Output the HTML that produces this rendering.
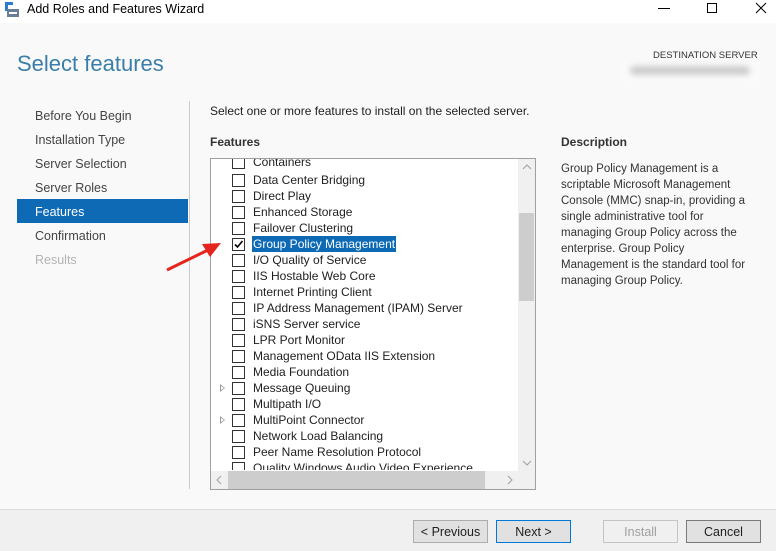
<!DOCTYPE html>
<html><head><meta charset="utf-8"><style>
*{margin:0;padding:0;box-sizing:border-box}
body{width:776px;height:551px;overflow:hidden;background:#f9f9f9;font-family:"Liberation Sans",sans-serif;font-size:12px;color:#1e1e1e;position:relative}
.a{position:absolute;white-space:nowrap}
.tb{position:absolute;left:0;top:0;width:776px;height:23px;background:#fff}
.nav{position:absolute;left:35px;font-size:12.5px;color:#444}
.row{position:absolute;left:0;height:16px;width:310px;font-size:12px;line-height:16px}
.cb{position:absolute;left:21px;top:2px;width:13px;height:13px;border:1px solid #333;background:#fff}
.lbl{position:absolute;left:41px;top:0;padding:0 1px}
.exp{position:absolute;left:9px;top:4px;width:0;height:0;border-left:5px solid #999;border-top:4px solid transparent;border-bottom:4px solid transparent}
.exp:after{content:"";position:absolute;left:-4px;top:-2px;border-left:3px solid #fff;border-top:2px solid transparent;border-bottom:2px solid transparent}
.btn{position:absolute;top:520px;height:23px;width:75px;border:1px solid #adadad;background:#e1e1e1;text-align:center;line-height:22px;font-size:12.5px}
</style></head><body>
<div class="tb"></div>
<svg class="a" style="left:4px;top:2px" width="16" height="16"><rect x="1" y="0" width="3" height="9" fill="#2b7bd0"/><rect x="1" y="0" width="8" height="3" fill="#2b7bd0"/><rect x="3" y="7" width="12" height="8" fill="#6a7f96"/><rect x="5" y="10" width="8" height="2" fill="#fff"/></svg>
<div class="a" style="left:27px;top:2px;font-size:12.5px;color:#000">Add Roles and Features Wizard</div>
<div class="a" style="left:658px;top:8px;width:12px;height:1px;background:#000"></div>
<div class="a" style="left:707px;top:3px;width:10px;height:10px;border:1px solid #000"></div>
<svg class="a" style="left:755px;top:2px" width="12" height="12"><path d="M1 1L11 11M11 1L1 11" stroke="#000" stroke-width="1"/></svg>
<div class="a" style="left:17px;top:51px;font-size:22px;color:#3a7ea8">Select features</div>
<div class="a" style="left:653px;top:50px;font-size:9.5px;color:#333">DESTINATION SERVER</div>
<div class="a" style="left:620px;top:62px;width:140px;height:20px;background:#fafafa"></div>
<div class="a" style="left:630px;top:66px;width:120px;height:9px;background:#ccc;filter:blur(3px);border-radius:5px"></div>
<div class="nav a" style="top:109px">Before You Begin</div>
<div class="nav a" style="top:133px">Installation Type</div>
<div class="nav a" style="top:157px">Server Selection</div>
<div class="nav a" style="top:181px">Server Roles</div>
<div class="a" style="left:17px;top:199px;width:171px;height:24px;background:#0e6ab4"></div>
<div class="nav a" style="top:205px;color:#fff">Features</div>
<div class="nav a" style="top:229px">Confirmation</div>
<div class="nav a" style="top:253px;color:#b4b4b4">Results</div>
<div class="a" style="left:189px;top:101px;width:1px;height:388px;background:#ccc"></div>
<div class="a" style="left:210px;top:104px;font-size:12px">Select one or more features to install on the selected server.</div>
<div class="a" style="left:210px;top:135px;font-weight:bold;font-size:12px;color:#333">Features</div>
<div class="a" style="left:561px;top:135px;font-weight:bold;font-size:12px;color:#333">Description</div>
<div class="a" style="left:561px;top:161px;font-size:11.5px;line-height:16px;color:#333">Group Policy Management is a<br>scriptable Microsoft Management<br>Console (MMC) snap-in, providing a<br>single administrative tool for<br>managing Group Policy across the<br>enterprise. Group Policy<br>Management is the standard tool for<br>managing Group Policy.</div>
<div class="a" style="left:210px;top:158px;width:326px;height:332px;border:1px solid #a0a0a0;background:#fff;overflow:hidden">
 <div class="a" style="left:0;top:0;width:307px;height:311px;overflow:hidden">
  <div class="row" style="top:-5px"><div class="cb"></div><div class="lbl">Containers</div></div>
  <div class="row" style="top:13px"><div class="cb"></div><div class="lbl">Data Center Bridging</div></div>
  <div class="row" style="top:29px"><div class="cb"></div><div class="lbl">Direct Play</div></div>
  <div class="row" style="top:45px"><div class="cb"></div><div class="lbl">Enhanced Storage</div></div>
  <div class="row" style="top:61px"><div class="cb"></div><div class="lbl">Failover Clustering</div></div>
  <div class="row" style="top:77px"><div class="cb"><svg width="11" height="11" style="position:absolute;left:0;top:0"><path d="M2 5.5L4.5 8L9.5 2" stroke="#000" stroke-width="1.6" fill="none"/></svg></div><div class="lbl" style="background:#0e6ab4;color:#fff">Group Policy Management</div></div>
  <div class="row" style="top:93px"><div class="cb"></div><div class="lbl">I/O Quality of Service</div></div>
  <div class="row" style="top:109px"><div class="cb"></div><div class="lbl">IIS Hostable Web Core</div></div>
  <div class="row" style="top:125px"><div class="cb"></div><div class="lbl">Internet Printing Client</div></div>
  <div class="row" style="top:141px"><div class="cb"></div><div class="lbl">IP Address Management (IPAM) Server</div></div>
  <div class="row" style="top:157px"><div class="cb"></div><div class="lbl">iSNS Server service</div></div>
  <div class="row" style="top:173px"><div class="cb"></div><div class="lbl">LPR Port Monitor</div></div>
  <div class="row" style="top:189px"><div class="cb"></div><div class="lbl">Management OData IIS Extension</div></div>
  <div class="row" style="top:205px"><div class="cb"></div><div class="lbl">Media Foundation</div></div>
  <div class="row" style="top:221px"><div class="exp"></div><div class="cb"></div><div class="lbl">Message Queuing</div></div>
  <div class="row" style="top:237px"><div class="cb"></div><div class="lbl">Multipath I/O</div></div>
  <div class="row" style="top:253px"><div class="exp"></div><div class="cb"></div><div class="lbl">MultiPoint Connector</div></div>
  <div class="row" style="top:269px"><div class="cb"></div><div class="lbl">Network Load Balancing</div></div>
  <div class="row" style="top:285px"><div class="cb"></div><div class="lbl">Peer Name Resolution Protocol</div></div>
  <div class="row" style="top:301px"><div class="cb"></div><div class="lbl">Quality Windows Audio Video Experience</div></div>
 </div>
 <div class="a" style="left:307px;top:0;width:17px;height:312px;background:#f0f0f0"></div>
 <div class="a" style="left:308px;top:54px;width:15px;height:88px;background:#cdcdcd"></div>
 <svg class="a" style="left:311px;top:5px" width="10" height="6"><path d="M1 5L5 1L9 5" stroke="#a0a0a0" fill="none"/></svg>
 <svg class="a" style="left:311px;top:301px" width="10" height="6"><path d="M1 1L5 5L9 1" stroke="#a0a0a0" fill="none"/></svg>
 <div class="a" style="left:0;top:312px;width:324px;height:18px;background:#f0f0f0"></div>
 <div class="a" style="left:17px;top:312px;width:257px;height:18px;background:#cdcdcd"></div>
 <svg class="a" style="left:5px;top:316px" width="6" height="10"><path d="M5 1L1 5L5 9" stroke="#a0a0a0" fill="none"/></svg>
 <svg class="a" style="left:296px;top:316px" width="6" height="10"><path d="M1 1L5 5L1 9" stroke="#a0a0a0" fill="none"/></svg>
</div>
<svg class="a" style="left:160px;top:236px" width="66" height="40"><path d="M7 34L48 14" stroke="#e52420" stroke-width="3"/><path d="M61 7L42 8L50 21Z" fill="#e52420"/></svg>
<div class="a" style="left:0;top:509px;width:776px;height:42px;background:#f0f0f0;border-top:1px solid #dcdcdc"></div>
<div class="btn" style="left:413px">&lt; Previous</div>
<div class="btn" style="left:496px;border-color:#0078d7">Next &gt;</div>
<div class="btn" style="left:603px;background:#f0f0f0;border-color:#c4c4c4;color:#a0a0a0">Install</div>
<div class="btn" style="left:686px;border-color:#7a7a7a">Cancel</div>
</body></html>
